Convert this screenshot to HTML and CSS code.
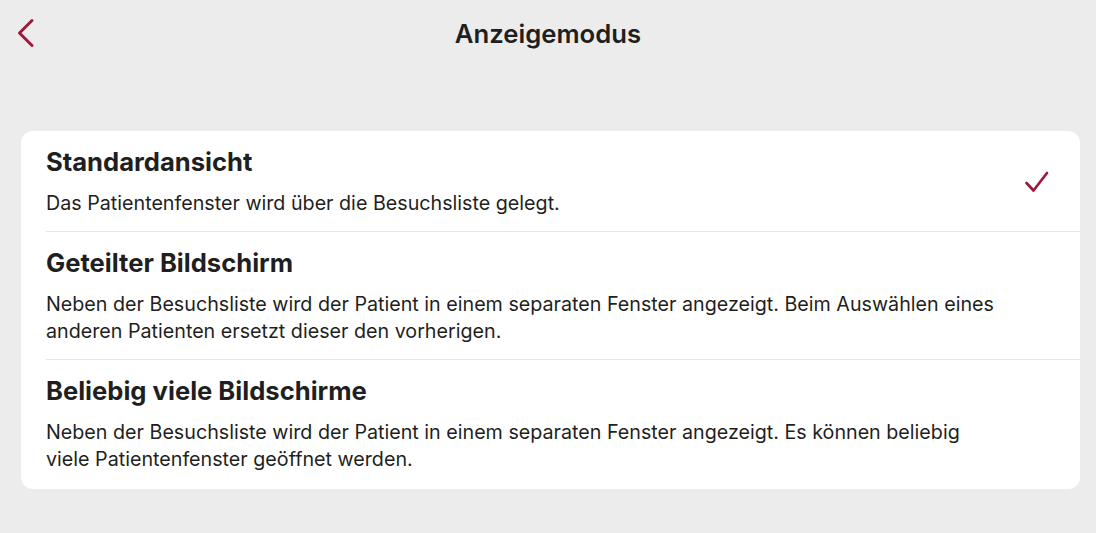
FILE: index.html
```html
<!DOCTYPE html>
<html lang="de">
<head>
<meta charset="utf-8">
<title>Anzeigemodus</title>
<link rel="stylesheet" href="styles.css">
</head>
<body>
<header class="navbar">
  <button class="back" aria-label="Zurück">
    <svg width="22" height="32" viewBox="0 0 22 32" aria-hidden="true"><path d="M18 3.5 L5.5 16 L18 28.5" fill="none" stroke="#9b1b3b" stroke-width="3" stroke-linecap="round" stroke-linejoin="round"/></svg>
  </button>
  <h1 class="title">Anzeigemodus</h1>
  <span class="spacer"></span>
</header>
<main class="content">
  <ul class="card">
    <li class="row">
      <div class="text">
        <h2 class="row-title">Standardansicht</h2>
        <p class="row-desc">Das Patientenfenster wird über die Besuchsliste gelegt.</p>
      </div>
      <svg class="check" width="26" height="24" viewBox="0 0 26 24" aria-hidden="true"><path d="M2.5 13 L9.5 20.5 L23 3" fill="none" stroke="#9b1b3b" stroke-width="2.7" stroke-linecap="round" stroke-linejoin="round"/></svg>
    </li>
    <li class="row">
      <div class="text">
        <h2 class="row-title">Geteilter Bildschirm</h2>
        <p class="row-desc">Neben der Besuchsliste wird der Patient in einem separaten Fenster angezeigt. Beim Auswählen eines<br>anderen Patienten ersetzt dieser den vorherigen.</p>
      </div>
    </li>
    <li class="row">
      <div class="text">
        <h2 class="row-title">Beliebig viele Bildschirme</h2>
        <p class="row-desc">Neben der Besuchsliste wird der Patient in einem separaten Fenster angezeigt. Es können beliebig<br>viele Patientenfenster geöffnet werden.</p>
      </div>
    </li>
  </ul>
</main>
</body>
</html>
```
FILE: styles.css
```css
* { box-sizing: border-box; }
html, body { margin: 0; padding: 0; }
body {
  background: #ececec;
  font-family: Inter, "Noto Sans", sans-serif;
  color: #1f1f21;
  width: 1096px;
  height: 533px;
  overflow: hidden;
}
.navbar {
  height: 66px;
  display: grid;
  grid-template-columns: 60px 1fr 60px;
  align-items: center;
}
.back {
  background: none;
  border: 0;
  padding: 0 0 0 14px;
  height: 66px;
  display: flex;
  align-items: center;
  cursor: pointer;
}
.title {
  margin: 0;
  text-align: center;
  font-size: 25.7px;
  font-weight: 600;
  letter-spacing: 0;
}
.content {
  padding: 65px 16px 0 21px;
}
.card {
  list-style: none;
  margin: 0;
  padding: 0 0 0 25px;
  background: #fff;
  border-radius: 12px;
}
.row {
  display: flex;
  align-items: center;
  justify-content: space-between;
  padding: 16px 30px 14px 0;
  border-bottom: 1px solid #e6e6e6;
}
.row:last-child { border-bottom: 0; padding-bottom: 16px; }
.text { flex: 1; min-width: 0; }
.row-title {
  margin: 0;
  font-size: 25.6px;
  line-height: 30px;
  font-weight: 700;
}
.row-desc {
  margin: 13px 0 0;
  font-size: 19.7px;
  line-height: 27px;
  font-weight: 400;
}
.check { flex: none; }
```
